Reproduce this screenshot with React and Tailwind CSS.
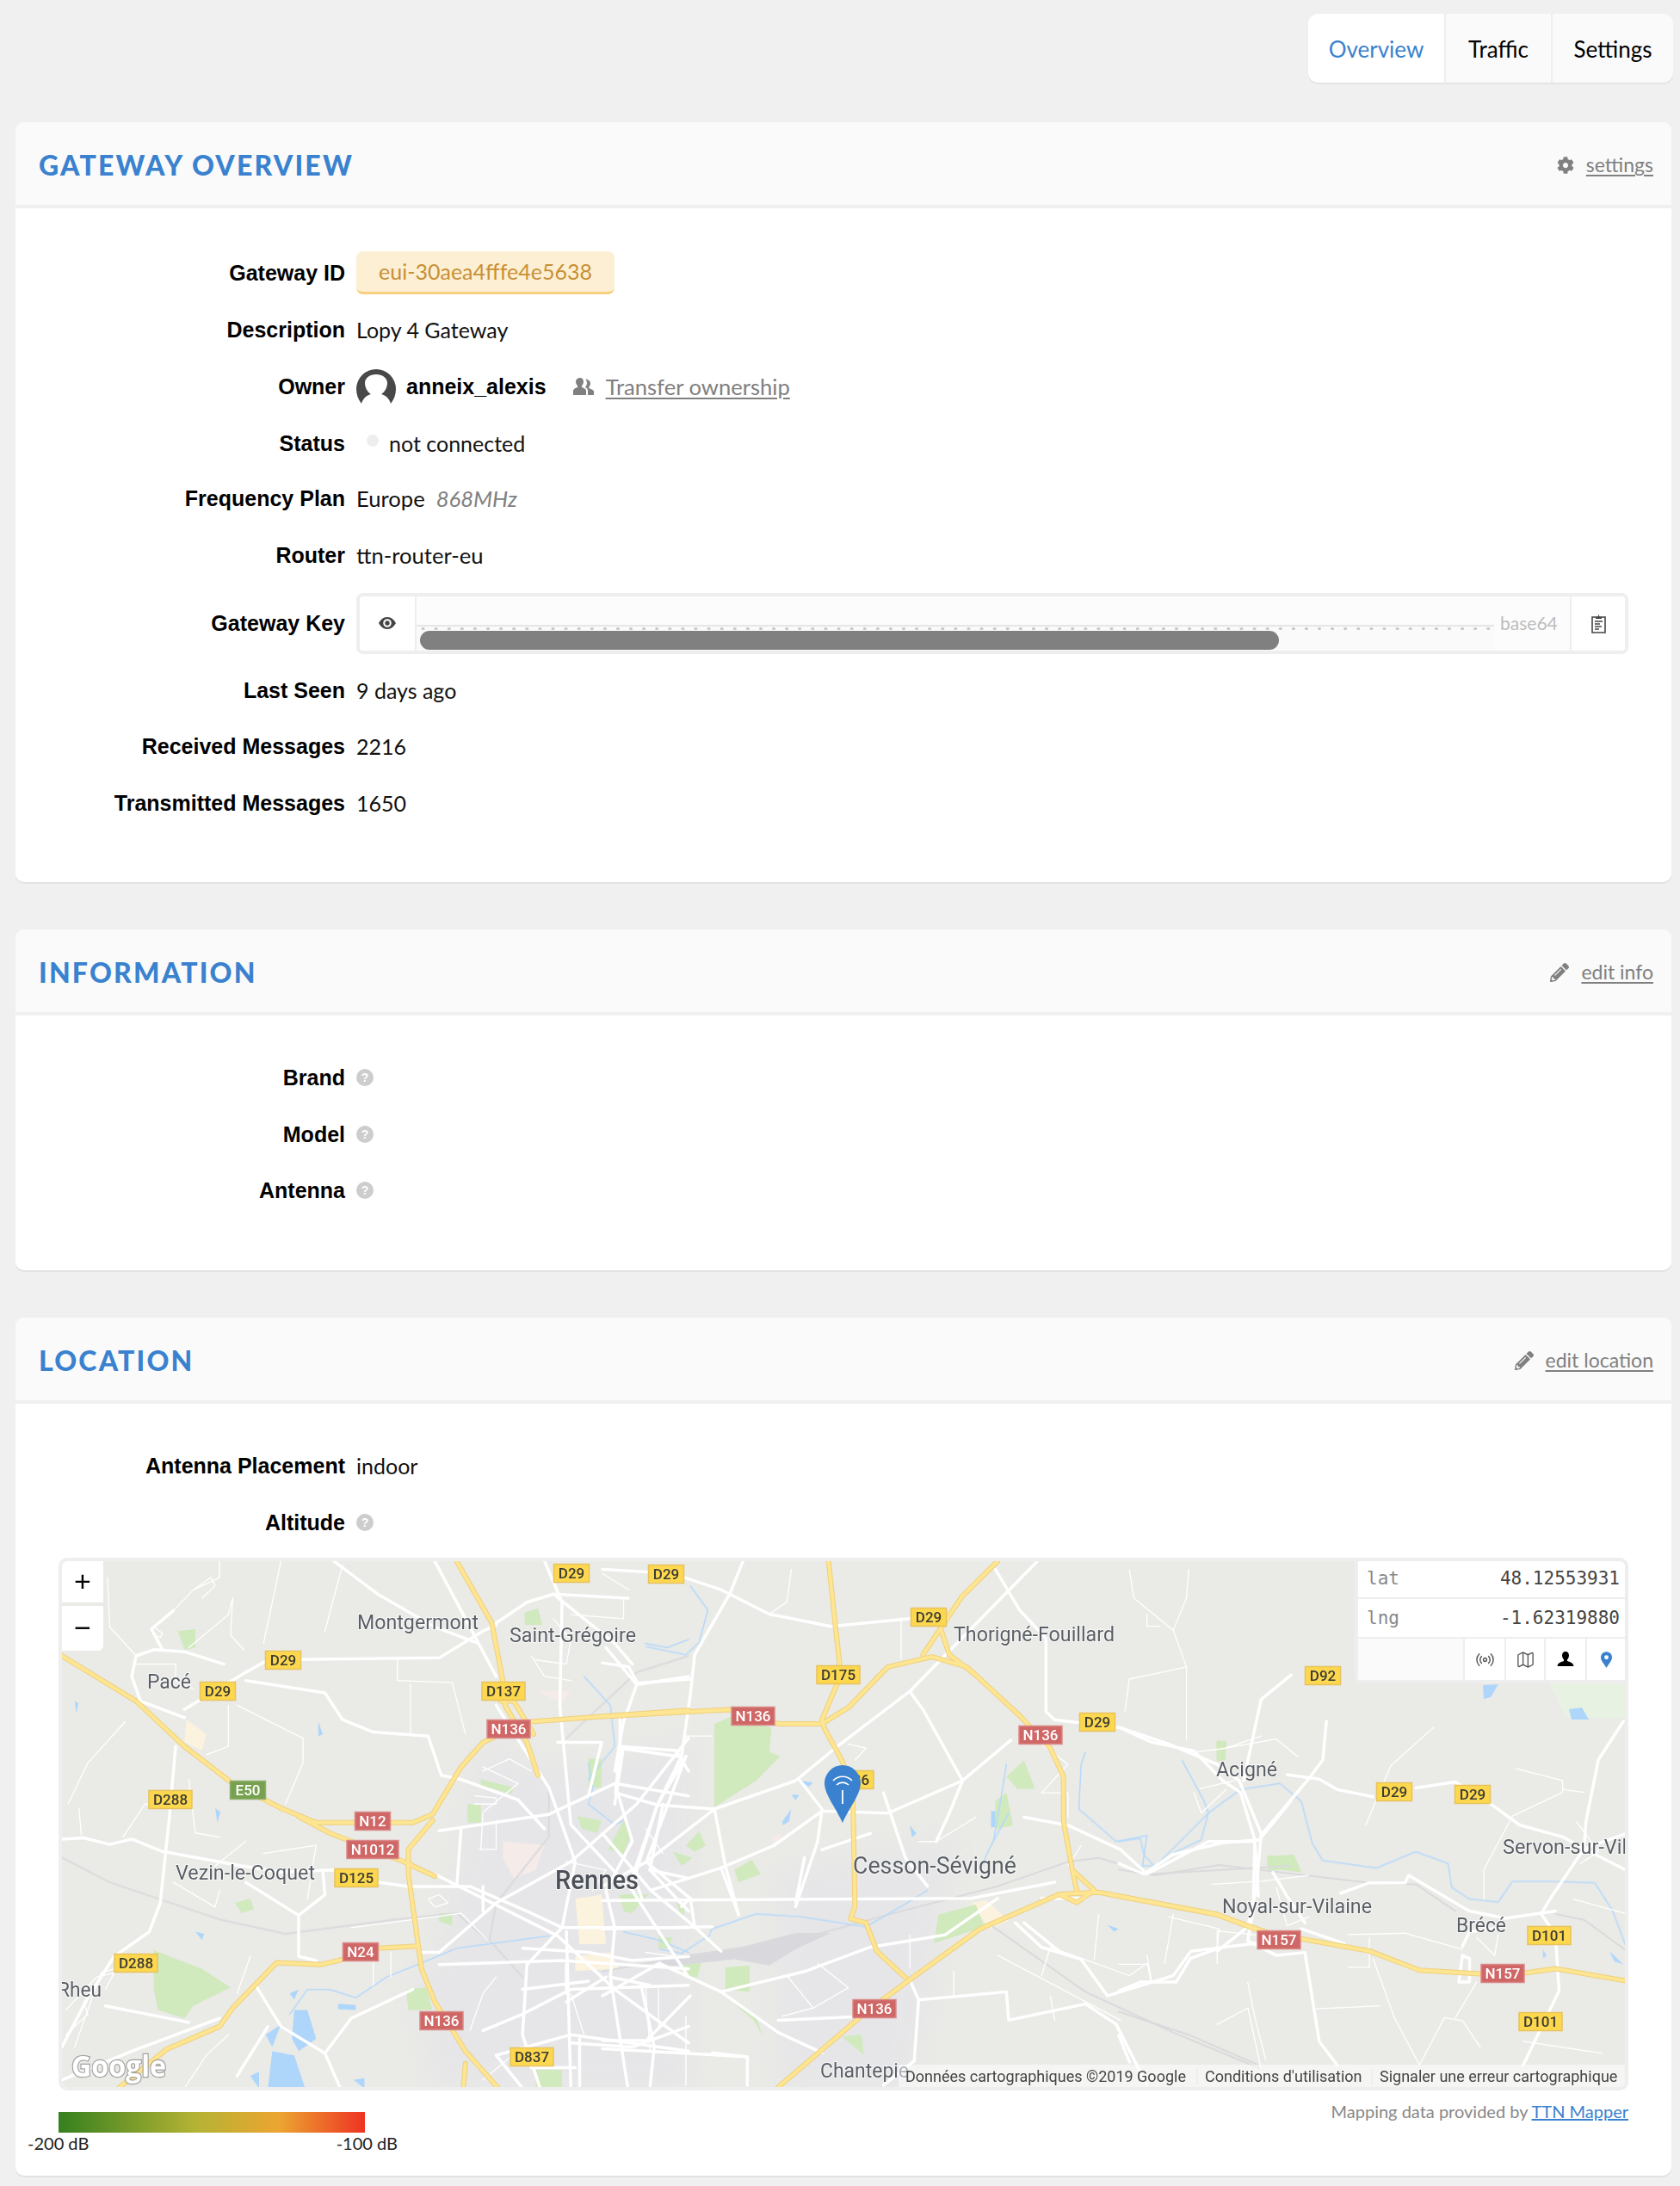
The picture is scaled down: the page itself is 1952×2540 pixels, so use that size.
import React from "react";
import { FaCog, FaPencilAlt } from "react-icons/fa";
import { Radio, Map as MapIcon } from "lucide-react";

const Z6 = "translate(0 1790) scale(.5102 .4785)";
const Z7 = "translate(700 1800) scale(.5102 .4719)";
const Z8 = "translate(1300 2000) scale(.4158 .3444)";

const regions = [
  {
    t: Z6,
    urban: ["1100,500 1250,560 1568,500 1568,1330 1000,1330 940,1090 1000,1000"],
    pale: ["1310,870 1370,860 1380,980 1320,980", "1310,1010 1390,1000 1410,1040 1310,1045", "425,435 470,470 460,510 420,490"],
    pink: ["1145,730 1240,740 1220,800 1170,820 1145,770", "1220,365 1300,365 1280,395"],
    green: ["350,995 460,1040 525,1085 440,1130 420,1160 360,1140 350,1090", "405,220 445,215 445,260 420,265", "1195,175 1225,165 1235,205 1195,205", "1095,580 1170,600 1165,615 1095,595", "1065,640 1095,640 1095,685 1065,685", "1340,530 1370,530 1370,600 1340,600", "1420,680 1440,710 1420,760 1385,750", "1410,860 1475,860 1440,905 1420,900", "1220,1285 1280,1285 1280,1330 1220,1330", "925,1090 970,1085 985,1140 930,1140", "1000,905 1030,905 1030,935 1000,925", "535,880 570,870 578,895 550,905", "1315,670 1370,680 1360,710 1325,700", "1500,960 1530,965 1525,990 1500,990", "1540,880 1560,890 1555,920"],
    water: ["610,1330 620,1240 670,1250 695,1330", "670,1140 700,1140 720,1210 680,1240 665,1210", "660,1100 680,1090 670,1115", "570,1300 590,1290 590,1330", "805,1310 830,1305 830,1330", "490,650 502,660 495,685", "445,950 465,955 460,970", "170,390 178,395 174,420", "725,440 735,470 725,475", "770,1125 810,1128 810,1140 770,1138", "605,1200 640,1175 620,1230"],
    river: ["1340,540 1350,600 1340,640 1400,690 1420,680", "660,1150 700,1090 750,1090 810,1110 880,1060 950,1030 1040,990 1250,960", "1330,330 1390,400 1400,500 1340,580", "1420,950 1500,970 1568,1000", "1470,250 1520,260 1568,240"],
    rail: ["141,770 250,830 500,920 650,955 900,920 1040,905 1110,970", "1250,600 1250,720 1130,880 1115,970 1190,1060", "1568,280 1450,320 1290,480"],
    minor: ["500,50 500,90 440,120 395,170", "245,90 250,210 310,280", "640,50 600,250", "780,60 740,220", "905,285 905,340 1030,345 1060,470", "935,350 935,470", "540,400 690,480 690,540 650,640", "600,760 720,740 700,870", "155,640 200,540 285,440", "180,650 185,715", "430,580 445,710 500,720", "280,720 330,640 380,640", "395,830 490,890 500,850", "560,730 490,790", "1100,550 1180,590 1100,660 1095,750", "570,1010 540,1100", "800,940 1050,905 1110,970", "850,1000 850,1080", "890,1000 890,1060", "170,1230 230,1050 260,1040", "420,1330 470,1250 520,1200", "1420,140 1420,190 1300,180", "1260,190 1300,240 1290,300 1220,290", "1080,620 1130,625 1130,640 1080,640", "1090,750 1130,750 1130,680", "350,210 370,225 365,235 350,230", "440,120 480,90 490,110 460,140", "430,260 520,180 530,140 525,230 555,265", "310,300 400,300 400,340 440,360", "520,400 520,500 470,520", "1210,280 1240,330 1300,340", "1210,560 1160,530 1100,560", "1000,860 1020,880 990,890 975,870 1000,860", "150,1200 200,1150 190,1120", "150,1140 220,1060 260,1050 240,1090", "1070,1190 1100,1100 1130,1060", "1290,780 1380,800 1350,850", "1470,700 1510,760", "1190,1230 1100,1310", "1300,1100 1330,1200", "1470,1080 1480,1240", "1470,1000 1540,1010", "1500,1080 1500,1180"],
    major: ["141,725 190,722 250,738 300,725 370,755 550,790 640,805 760,800 830,825 930,840 1070,840 1200,900 1280,940 1568,940", "400,500 385,680 365,880 340,950 260,1010 200,1110 141,1230", "141,1310 300,1240 500,1160", "240,1130 430,1170", "585,1085 640,1180 740,1245 800,1160 940,1090", "610,1180 540,1300", "740,1245 775,1330", "300,330 310,280 350,265 420,270 510,300", "300,330 320,390 420,430", "420,410 560,320 610,290 1000,285 1100,220 1130,205", "560,340 740,370 780,435 850,465 975,475 1005,570 1050,580 1180,630 1240,700", "760,50 860,130 990,210 1090,250", "990,50 1090,250 1130,330", "1000,705 1250,665 1400,590 1568,620", "990,810 1270,960 1400,1090 1568,1220", "1240,50 1280,150 1275,400 1300,690 1440,850 1568,1060", "1130,400 1250,600 1310,780 1280,940 1200,1030 1190,1200 1230,1330", "1568,480 1450,640 1300,780 1130,880 1000,1000 960,1000", "1000,1030 1280,1020 1568,1040", "620,870 680,910 680,1010 720,1020", "560,830 620,870", "680,910 740,860 735,800", "1100,1190 1190,1150 1300,1090 1568,1080", "1130,1250 1190,1330", "1130,1250 1300,1200 1568,1240", "1400,590 1440,730 1380,850 1400,940 1390,1060 1430,1330", "1290,950 1300,1330", "1410,500 1540,510 1568,560", "1420,500 1400,640", "1568,330 1450,350 1420,440 1400,560", "1440,300 1400,250 1260,130 1200,150 1130,200", "1260,130 1430,140", "1450,350 1380,260", "395,170 345,215 370,265", "1568,1180 1440,1230 1300,1220", "1040,840 1050,700", "1100,840 1100,900", "1190,990 1340,1000 1440,1020 1568,1010", "1480,800 1568,820", "1510,640 1480,800 1568,900", "1460,1080 1490,1230 1480,1330", "1320,1210 1320,1330", "1380,1060 1290,1120", "1290,1030 1290,1100", "1190,1090 1340,1070", "1390,1060 1480,1080", "1210,1280 1310,1280", "1270,490 1370,490 1340,620"],
    hw: ["141,280 310,390 420,500 530,590 640,650 720,685 940,685 985,665 1050,550 1100,490 1160,460 1210,440 1400,425 1568,412", "680,670 750,710 920,780 990,815", "985,680 930,750 930,810 960,1040 990,1120 1060,1240 1135,1330", "950,985 860,990 770,1020 730,1030 630,1025 530,1135 500,1180 380,1235 270,1330", "1040,50 1120,200 1145,340 1150,400 1200,490 1225,570", "1060,1270 1055,1330", "1140,390 1170,390 1215,470"],
  },
  {
    t: Z7,
    urban: ["800,720 700,1325 400,1325 400,800"],
    pale: ["840,870 875,865 925,915 880,935"],
    pink: ["385,710 405,700 410,720 390,725"],
    green: ["255,430 300,410 385,440 380,500 405,510 350,570 255,635", "765,900 850,875 870,930 755,970", "280,1030 335,1025 335,1090 280,1085", "300,790 340,765 360,800 310,820", "190,730 220,695 235,730 210,745", "160,745 205,760 180,780", "1515,755 1568,755 1568,790 1515,790", "545,1200 590,1195 595,1245", "920,560 960,520 985,590 945,590", "895,620 920,600 935,680 895,690", "55,850 105,850 70,890", "180,1020 225,1020 215,1055 180,1050", "1400,470 1420,475 1418,520 1398,520", "300,1120 350,1150 365,1200 345,1160"],
    gray: ["135,1005 300,985 440,945 520,945 440,985 380,1025 300,1010 135,1030"],
    water: ["410,670 430,640 425,670 410,680", "450,570 480,575 470,585", "700,680 715,700 705,710", "885,645 895,645 895,685 885,685", "430,605 448,605 440,618", "1150,925 1175,935 1165,942"],
    river: ["245,945 250,935 350,898 450,905 600,930 680,880 740,840", "130,985 180,995 245,950", "1100,500 1090,530 1085,640 1170,720 1240,705 1230,780 1260,780 1380,650 1370,620 1320,520", "920,530 905,630 890,720", "860,790 880,740 925,650", "200,90 240,150 220,230 190,260 100,240"],
    rail: ["0,1040 200,1000 450,960 650,900 900,830 1060,770 1130,760 1250,800 1568,780", "890,930 1100,1090 1300,1190 1500,1280"],
    minor: ["1200,50 1210,120 1300,200 1330,290 1200,320 1190,400", "1335,50 1330,120 1300,200", "680,170 680,270", "250,460 190,460 190,470", "1240,160 1240,190 1270,190", "1330,290 1330,470", "1000,600 1060,600 1060,660", "900,1000 1180,1160", "1000,1050 1020,980 1200,1050 1240,1020", "700,950 700,1030", "490,1020 560,1080 480,1130", "1090,730 1060,780", "800,1040 800,1100", "190,1150 190,1320", "1490,950 1400,940 1400,1020", "1350,500 1420,490 1500,460", "1360,590 1440,570", "560,480 600,490 575,520", "1300,900 1280,1020", "1130,900 1120,1010", "1400,1170 1470,1130 1500,1280", "720,720 760,720 850,660", "420,1050 480,1130 410,1150", "1020,1100 1030,1160", "1240,1000 1250,1060", "1000,480 1060,530 1000,600", "0,60 60,100", "430,50 420,130 380,160"],
    major: ["0,50 160,60 270,100 380,160 520,190 710,170", "210,260 290,110 320,30", "210,260 200,360 180,510 125,630 75,800", "0,280 60,290 80,330 200,320", "990,30 700,350 530,490 440,570 255,640 125,630 30,600", "255,640 280,780 310,900", "255,640 100,770 0,830", "700,350 730,395 820,570 790,650 760,720", "820,570 650,650 500,645 390,730 270,785 110,840", "930,470 820,570", "895,50 950,150 1010,220 1010,400 1030,420 1180,440 1290,480 1400,530 1450,570 1500,700 1490,830", "1568,310 1500,370 1460,570", "1568,620 1500,710", "960,660 1060,680 1180,740 1240,800 1380,720 1480,720", "0,865 840,860 1030,820", "0,935 250,930", "270,1090 400,1190 500,1240", "200,1100 100,1210 0,1210", "330,1250 0,1230", "460,1040 610,980 780,950 900,860", "460,1040 270,1090 130,1020", "600,1150 400,1160", "720,1110 920,1090 925,1160 1100,1120 1170,1170 1240,1320", "700,1060 720,1110 710,1260 640,1320", "940,920 1000,980 1090,1010 1150,1100 1300,1050 1340,990 1568,960", "450,570 500,640 490,720 440,880", "640,600 690,760 740,830", "500,740 610,700", "125,630 190,510", "40,490 170,510", "30,600 40,490 40,420", "125,630 70,800 90,860", "190,510 100,770 200,860 210,930 270,990", "270,785 310,900", "1000,860 1100,860", "960,920 1040,990", "1490,830 1470,930 1400,990", "460,760 440,870", "180,880 200,860", "0,700 110,840", "110,840 210,930", "250,1240 330,1250 330,1320", "0,1100 130,1020"],
    hw: ["515,30 530,185 540,280 535,330 500,420 505,440 545,520 570,590 575,880 565,910 600,920 625,990 690,1055", "0,412 290,395 400,430 500,430 560,390 650,290 750,265 830,290 950,410 1020,490 1050,560 1050,670 1070,790 1080,840", "900,30 820,115 770,195 730,260", "770,195 790,260 850,310", "400,1325 600,1140 700,1060 860,935 1040,850 1130,845 1400,900 1530,950", "1070,790 1100,820 1120,840 1080,870 1040,850"],
  },
  {
    t: Z8,
    urban: [],
    pale: [],
    pink: [],
    green: ["415,455 490,450 510,510 415,495", "272,70 300,65 298,130 275,135"],
    water: ["1185,770 1195,790 1185,800", "1370,775 1410,820 1385,810"],
    river: ["0,405 60,395 70,450 100,490 160,440 230,400 250,310 340,230 450,210 510,270 540,410 570,470 720,495 830,440 920,480 930,560 980,600 1060,610 1100,540 1200,540 1330,545 1380,640 1414,750"],
    rail: ["0,980 200,1060 390,1160", "0,500 100,520 280,485 700,545 830,550 940,640", "1220,650 1300,670 1414,770"],
    minor: ["880,20 760,150 690,350", "1110,160 1240,200 1240,240 1100,320 1020,500 1020,600", "1240,230 1300,240", "0,820 80,820 90,880", "140,660 280,700 275,770", "640,720 800,715 960,770", "710,800 770,1000 840,1160", "910,1000 840,1160", "910,1000 960,1010 1010,1100", "1130,1080 1350,1120", "550,970 730,960", "210,240 230,310 300,230", "260,550 400,540 530,520", "940,1000 1000,880", "1420,650 1270,600", "300,90 440,60 500,120", "440,560 470,690 530,660", "640,830 700,830 700,730", "1000,730 1050,790 1060,720", "1280,340 1340,440 1290,480", "360,880 380,1000 410,1140"],
    major: ["0,20 90,70 210,100 290,200 340,240 380,400 390,590", "470,180 560,195 610,230 710,255", "830,225 940,205 1040,280 1120,350 1240,390 1300,430 1414,500", "580,0 570,130 530,195 400,380", "1410,0 1340,130 1305,340 1300,430 1210,590 1180,650 1220,720 1230,910 1130,1160", "1414,380 1300,430", "0,480 70,515 150,450 290,410 390,400", "620,580 700,545 800,545 810,520 950,620 980,640 1080,665 1220,640", "380,400 375,640 360,740 440,790 520,780 560,1080 610,1160", "520,680 470,590 430,510", "0,910 60,880 160,880 200,800 270,770", "0,1060 30,1150", "960,760 980,710 1050,700", "510,700 630,750", "960,790 950,880 980,880 980,800 960,790"],
    hw: ["0,590 270,650 400,710 630,760 700,775 840,840 1010,852 1130,850 1220,835 1414,875"],
  },
];

const badges = [
  ["D29", 664, 1828], ["D29", 774, 1829], ["D29", 1079, 1879], ["D29", 329, 1929], ["D29", 253, 1965],
  ["D137", 585, 1965], ["N136", 591, 2009], ["N136", 875, 1994], ["D175", 974, 1946], ["D92", 1537, 1947],
  ["N136", 1209, 2016], ["D29", 1275, 2001], ["E50", 288, 2080], ["D288", 198, 2091], ["N12", 433, 2116],
  ["N1012", 433, 2149], ["D125", 414, 2182], ["D29", 1620, 2082], ["D29", 1711, 2085], ["N24", 419, 2268],
  ["D288", 158, 2281], ["N136", 513, 2348], ["D837", 618, 2390], ["N136", 1016, 2334], ["N157", 1486, 2254],
  ["N157", 1746, 2293], ["D101", 1800, 2249], ["D101", 1790, 2349], ["D136", 990, 2068],
];

const places = [
  ["Montgermont", 415, 1893, 24, 141], ["Saint-Grégoire", 592, 1908, 24, 147], ["Pacé", 171, 1962, 24, 51],
  ["Vezin-le-Coquet", 204, 2184, 24, 162], ["Rheu", 67, 2320, 24, 51], ["Thorigné-Fouillard", 1108, 1907, 24, 187],
  ["Cesson-Sévigné", 991, 2177, 27, 190], ["Acigné", 1413, 2064, 24, 71], ["Servon-sur-Vilaine", 1746, 2154, 24, 188],
  ["Noyal-sur-Vilaine", 1420, 2223, 24, 174], ["Brécé", 1692, 2245, 24, 58], ["Chantepie", 953, 2414, 24, 103],
];

function MapDrawing() {
  const layer = (key, render) => regions.map((r, i) => (
    <g key={i} transform={r.t}>{(r[key] || []).map((p, j) => render(p, j))}</g>
  ));
  const line = (stroke, w) => (p, j) => (
    <polyline key={j} points={p} fill="none" stroke={stroke} strokeWidth={w} strokeLinejoin="round" strokeLinecap="round" vectorEffect="non-scaling-stroke" />
  );
  const area = (fill) => (p, j) => <polygon key={j} points={p} fill={fill} />;
  return (
    <svg width="1816" height="611" viewBox="72 1814 1816 611" className="block">
      <defs>
        <filter id="wide" x="-10%" y="-10%" width="120%" height="120%"><feGaussianBlur stdDeviation="14" /></filter>
        <filter id="soft"><feGaussianBlur stdDeviation="0.7" /></filter>
      </defs>
      <rect x="72" y="1814" width="1816" height="611" fill="#eaeae7" />
      <g filter="url(#wide)">{layer("urban", area("#e6e6e8"))}</g>
      <g filter="url(#soft)">
        {layer("pale", area("#fcf3de"))}
        {layer("pink", area("#f5ebe8"))}
        {layer("green", area("#d0e9bd"))}
        {layer("gray", area("#d9d9dd"))}
        {layer("water", area("#aed6fb"))}
        {layer("rail", line("#dadadd", 2))}
        {layer("river", line("#b5d9fa", 1.5))}
        {layer("minor", line("#ffffff", 1.3))}
        {layer("major", line("#ffffff", 3.5))}
        {layer("hw", line("#efd07c", 6))}
        {layer("hw", line("#fde592", 4))}
      </g>
      <polygon points="1800,1956 1888,1956 1888,1996 1820,1996" fill="#e8f2e3" />
      <polygon points="1823,1986 1838,1984 1846,1998 1826,1998" fill="#aed6fb" />
      <polygon points="1723,1958 1741,1957 1732,1972 1724,1974" fill="#aed6fb" />
      {places.map(([t, x, y, s, w]) => (
        <text key={t} x={x} y={y} fontFamily="Roboto" fontSize={s} fill="#5a5f66" stroke="#fff" strokeWidth="2" strokeOpacity=".65" paintOrder="stroke" textLength={w} lengthAdjust="spacingAndGlyphs">{t}</text>
      ))}
      <text x="645" y="2195" fontFamily="Roboto" fontWeight="500" fontSize="31" fill="#4c5159" stroke="#fff" strokeWidth="2" strokeOpacity=".65" paintOrder="stroke" textLength="97" lengthAdjust="spacingAndGlyphs">Rennes</text>
      {badges.map(([t, x, y], i) => {
        const red = t[0] === "N";
        const green = t[0] === "E";
        const w = t.length === 3 ? 41 : t.length === 4 ? 50 : 60;
        return (
          <g key={i}>
            <rect x={x - w / 2} y={y - 10.5} width={w} height="21" fill={red ? "#cf6766" : green ? "#77a04f" : "#fdd84f"} stroke={red ? "#d98a88" : green ? "#8fb06d" : "#e8c25c"} strokeWidth="1.5" />
            <text x={x} y={y + 6} textAnchor="middle" fontFamily="Roboto" fontWeight="500" fontSize="17" fill={red || green ? "#ffffff" : "#3c3c34"}>{t}</text>
          </g>
        );
      })}
      <path d="M979 2118 C972 2102 958 2085 958 2072 a21 21 0 0 1 42 0 C1000 2085 986 2102 979 2118 Z" fill="#3a82cf" />
      <path d="M968 2069 a15 15 0 0 1 22 0 M972 2074 a10 10 0 0 1 14 0" fill="none" stroke="#fff" strokeWidth="1.6" />
      <path d="M979 2080 V2096" stroke="#fff" strokeWidth="1.8" />
      <text x="83" y="2413" fontFamily="Open Sans" fontWeight="700" fontSize="34" fill="#ffffff" stroke="#8a8a8a" strokeWidth="2.5" strokeOpacity=".75" paintOrder="stroke" textLength="110" lengthAdjust="spacingAndGlyphs">Google</text>
    </svg>
  );
}

function Pin({ className }) {
  return (
    <svg viewBox="0 0 16 22" className={className}>
      <path fillRule="evenodd" d="M8 1a7 7 0 0 0-7 7c0 4 4 8 7 13 3-5 7-9 7-13a7 7 0 0 0-7-7Zm0 4.500a2.600 2.600 0 1 1 0 5.200 2.600 2.600 0 0 1 0-5.200Z" fill="#3a82cf" />
    </svg>
  );
}

function Help() {
  return (
    <span className="flex h-[20px] w-[20px] items-center justify-center rounded-full bg-[#cdcdcd] text-[14px] font-bold leading-none text-white [font-family:'Liberation_Sans',sans-serif]">?</span>
  );
}

function Row({ label, h, children }) {
  return (
    <div className={`flex items-center gap-[13px] ${h}`}>
      <div className="w-[383px] shrink-0 text-right text-[25px] font-bold leading-[30px] text-black [font-family:'Liberation_Sans',Arial,sans-serif]">{label}</div>
      <div className="flex min-w-0 flex-1 items-center text-[25px] leading-[32px] text-[#111]">{children}</div>
    </div>
  );
}

function Card({ title, action, icon, children, className }) {
  return (
    <section className={`ml-[18px] mr-[10px] rounded-[10px] bg-white shadow-[0_2px_0_#e2e2e2] ${className}`}>
      <header className="flex h-[100px] items-center justify-between rounded-t-[10px] border-b-4 border-[#f0f0f0] bg-[#fafafa] pl-[27px] pr-[21px] pt-[3px]">
        <h2 className="text-[32px] font-black leading-[40px] tracking-[2.2px] text-[#3a82cf]">{title}</h2>
        <div className="flex items-center gap-[14px] text-[23px] text-[#808080]">
          {icon}
          <a className="underline decoration-2 underline-offset-[3px]">{action}</a>
        </div>
      </header>
      {children}
    </section>
  );
}

export default function App() {
  return (
    <div className="min-h-[2540px] bg-[#f0f0f0] pt-[16px] pb-[10px] [font-family:Lato,sans-serif]">
      <nav className="flex justify-end pr-[8px]">
        <div className="flex h-[80px] overflow-hidden rounded-[12px] bg-[#fafafa] pt-0 text-[26px] leading-[32px] shadow-[0_2px_0_#e4e4e4]">
          <a className="flex w-[158px] items-center justify-center bg-white pt-[2px] text-[#3a82cf]">Overview</a>
          <a className="flex w-[124px] items-center justify-center border-l-2 border-[#eeeeee] pt-[2px] text-black">Traffic</a>
          <a className="flex w-[142px] items-center justify-center border-l-2 border-[#eeeeee] pt-[2px] text-black">Settings</a>
        </div>
      </nav>

      <Card className="mt-[46px] pb-[57px]" title="GATEWAY OVERVIEW" action="settings" icon={<FaCog className="h-[20px] w-[20px]" />}>
        <div className="pt-[42px]">
          <Row label="Gateway ID" h="h-[66px]">
            <span className="flex h-[50px] w-[300px] items-center justify-center rounded-[8px] border-b-[3px] border-[#f6cf7f] bg-[#fcefd3] pb-[2px] text-[#c98f35]">eui-30aea4fffe4e5638</span>
          </Row>
          <Row label="Description" h="h-[66px]">Lopy 4 Gateway</Row>
          <Row label="Owner" h="h-[66px]">
            <svg width="46" height="40" viewBox="0 0 46 40" className="mr-[12px] shrink-0">
              <path d="M23 0a23 23 0 0 1 23 23c0 6-2 12-6 17-2-7-7-10-11-11 5-3 7-9 7-13 0-6-6-10-13-10S10 10 10 16c0 4 2 10 7 13-4 1-9 4-11 11-4-5-6-11-6-17A23 23 0 0 1 23 0Z" fill="#484848" />
            </svg>
            <span className="text-[25px] font-bold text-black [font-family:'Liberation_Sans',Arial,sans-serif]">anneix_alexis</span>
            <svg width="24" height="20" viewBox="0 0 24 20" className="ml-[31px] mr-[14px] shrink-0">
              <path d="M8 0c2.600 0 4 2 4 4.500 0 2-1 3.800-2 4.700v1.800c3 1 5 2 5 4V20H0v-5c0-2 2-3 5-4V9.200C4 8.300 3 6.500 3 4.500 3 2 5.400 0 8 0Z M16.500 2.500c2.200 0 3.500 1.800 3.500 4 0 1.700-.8 3.200-1.600 4v1.700c2.800 1 5.600 1.800 5.600 3.800v4h-7v-5c0-2-1-3-3-4l.5-1c1-1 1.500-2.500 1.500-3.800 0-1.500-.5-3-1.500-4 .5-.4 1-.7 2-.7Z" fill="#808080" />
            </svg>
            <a className="text-[25.600px] text-[#808080] underline decoration-2 underline-offset-[3px]">Transfer ownership</a>
          </Row>
          <Row label="Status" h="h-[66px]">
            <span className="ml-[12px] mr-[12px] h-[14px] w-[14px] -translate-y-[3px] rounded-full bg-[#eeeeee]" />
            not connected
          </Row>
          <Row label="Frequency Plan" h="h-[62px]">
            <span className="text-[25.600px]">Europe</span><em className="ml-[13px] text-[25.600px] text-[#808080]">868MHz</em>
          </Row>
          <Row label="Router" h="h-[70px]"><span className="text-[25.600px]">ttn-router-eu</span></Row>
          <Row label="Gateway Key" h="h-[88px]">
            <div className="mr-[50px] flex h-[71px] flex-1 overflow-hidden rounded-[8px] border-4 border-[#eeeeee] bg-[#fcfcfc]">
              <div className="flex w-[66px] shrink-0 items-center justify-center border-r-2 border-[#eeeeee] bg-white">
                <svg width="20" height="14" viewBox="0 0 20 14">
                  <path fillRule="evenodd" d="M10 0C5 0 2 3.500 0 7c2 3.500 5 7 10 7s8-3.500 10-7c-2-3.500-5-7-10-7Zm0 2.200a4.800 4.800 0 1 1 0 9.600 4.800 4.800 0 0 1 0-9.600Zm0 2.100a2.700 2.700 0 1 0 0 5.400 2.700 2.700 0 0 0 0-5.400Z" fill="#444444" />
                </svg>
              </div>
              <div className="flex min-w-0 flex-1 flex-col justify-end">
                <div className="w-[1252px] border-t-2 border-[#e6e6e6] bg-[#fafafa]">
                  <div className="h-[5px] bg-[radial-gradient(circle,#c8c8c8_1.6px,transparent_2px)] bg-[length:15.1px_5px]" />
                  <div className="pl-[4px] pb-[1px]">
                    <div className="h-[22px] w-[998px] rounded-[11px] bg-[#808080]" />
                  </div>
                </div>
              </div>
              <div className="flex w-[86px] shrink-0 items-center pl-[5px] text-[21px] text-[#bdbdbd]">base64</div>
              <div className="flex w-[64px] shrink-0 items-center justify-center border-l-2 border-[#eeeeee] bg-white">
                <svg width="17" height="23" viewBox="0 0 17 23">
                  <path d="M1 4h15v18H1z" fill="none" stroke="#444444" strokeWidth="1.600" />
                  <path d="M5 4h2.500l1-3.500 1 3.500H12v2H5z" fill="#444444" />
                  <path d="M4 9h9M4 12h6M4 15h8M4 18h5" stroke="#444444" strokeWidth="1.400" />
                </svg>
              </div>
            </div>
          </Row>
          <Row label="Last Seen" h="h-[68px]">9 days ago</Row>
          <Row label="Received Messages" h="h-[62px]">2216</Row>
          <Row label="Transmitted Messages" h="h-[70px]">1650</Row>
        </div>
      </Card>

      <Card className="mt-[55px] pb-[60px]" title="INFORMATION" action="edit info" icon={<FaPencilAlt className="h-[22px] w-[22px]" />}>
        <div className="pt-[39px]">
          <Row label="Brand" h="h-[66px]"><Help /></Row>
          <Row label="Model" h="h-[65px]"><Help /></Row>
          <Row label="Antenna" h="h-[66px]"><Help /></Row>
        </div>
      </Card>

      <Card className="mt-[55px] pb-[26px]" title="LOCATION" action="edit location" icon={<FaPencilAlt className="h-[22px] w-[22px]" />}>
        <div className="pt-[39px]">
          <Row label="Antenna Placement" h="h-[66px]">indoor</Row>
          <Row label="Altitude" h="h-[66px]"><Help /></Row>
        </div>
        <div className="relative mx-[50px] mt-[8px] overflow-hidden rounded-[10px] border-4 border-[#eeeeee]">
          <MapDrawing />
          <div className="absolute left-0 top-0 flex w-[48px] flex-col gap-[4px] text-black">
            <button className="flex h-[48px] items-center justify-center bg-white pb-[3px] text-[34px] leading-none [font-family:'Liberation_Sans',sans-serif]">+</button>
            <button className="flex h-[52px] items-center justify-center rounded-br-[6px] bg-white pb-[3px] text-[34px] leading-none [font-family:'Liberation_Sans',sans-serif]">−</button>
          </div>
          <div className="absolute right-0 top-0 flex w-[314px] flex-col gap-[2px] rounded-bl-[8px] border-b-4 border-l-4 border-[#eeeeee] bg-[#eeeeee] text-[21px] [font-family:'DejaVu_Sans_Mono',monospace]">
            <div className="flex h-[42px] items-center justify-between bg-white pl-[10px] pr-[6px]">
              <span className="text-[#888888]">lat</span><span className="text-[#444444]">48.12553931</span>
            </div>
            <div className="flex h-[44px] items-center justify-between bg-white pl-[10px] pr-[6px] pt-[2px]">
              <span className="text-[#888888]">lng</span><span className="text-[#444444]">-1.62319880</span>
            </div>
            <div className="flex h-[48px] gap-[2px]">
              <div className="flex-1 bg-[#fafafa]" />
              <div className="flex w-[46px] items-center justify-center bg-white text-[#555555]"><Radio size={23} strokeWidth={1.500} /></div>
              <div className="flex w-[44px] items-center justify-center bg-white text-[#555555]"><MapIcon size={23} strokeWidth={1.400} /></div>
              <div className="flex w-[46px] items-center justify-center bg-white">
                <svg width="20" height="20" viewBox="0 0 20 20">
                  <path d="M10 1c2.500 0 4 2 4 4.500 0 2-1 4-2 4.800V12c3 1 7 2 7.500 6H.5C1 14 5 13 8 12v-1.700C7 9.500 6 7.500 6 5.500 6 3 7.500 1 10 1Z" fill="#000000" />
                </svg>
              </div>
              <div className="flex w-[44px] items-center justify-center bg-white"><Pin className="h-[21px] w-[15px]" /></div>
            </div>
          </div>
          <div className="absolute bottom-0 right-0 flex h-[26px] w-[844px] items-center bg-white/50 pt-[2px] text-[18px] leading-none text-[#444444] [font-family:Roboto,sans-serif]">
            <span className="w-[346px] pl-[8px]">Données cartographiques ©2019 Google</span>
            <span className="w-[203px] border-l-2 border-[#eeeeee] pl-[8px]">Conditions d'utilisation</span>
            <span className="flex-1 border-l-2 border-[#eeeeee] pl-[8px]">Signaler une erreur cartographique</span>
          </div>
        </div>
        <div className="mx-[50px] flex items-start justify-between">
          <div className="mt-[25px] w-[356px]">
            <div className="h-[24px] bg-[linear-gradient(to_right,#35801f,#b5b334_45%,#eca531_72%,#ee3322)]" />
            <div className="-ml-[36px] -mr-[38px] flex justify-between text-[20px] leading-[24px] text-[#222222]">
              <span>-200 dB</span><span>-100 dB</span>
            </div>
          </div>
          <div className="mt-[10px] text-[20px] leading-[28px] text-[#888888]">
            Mapping data provided by <a className="text-[#3a82cf] underline">TTN Mapper</a>
          </div>
        </div>
      </Card>
    </div>
  );
}
